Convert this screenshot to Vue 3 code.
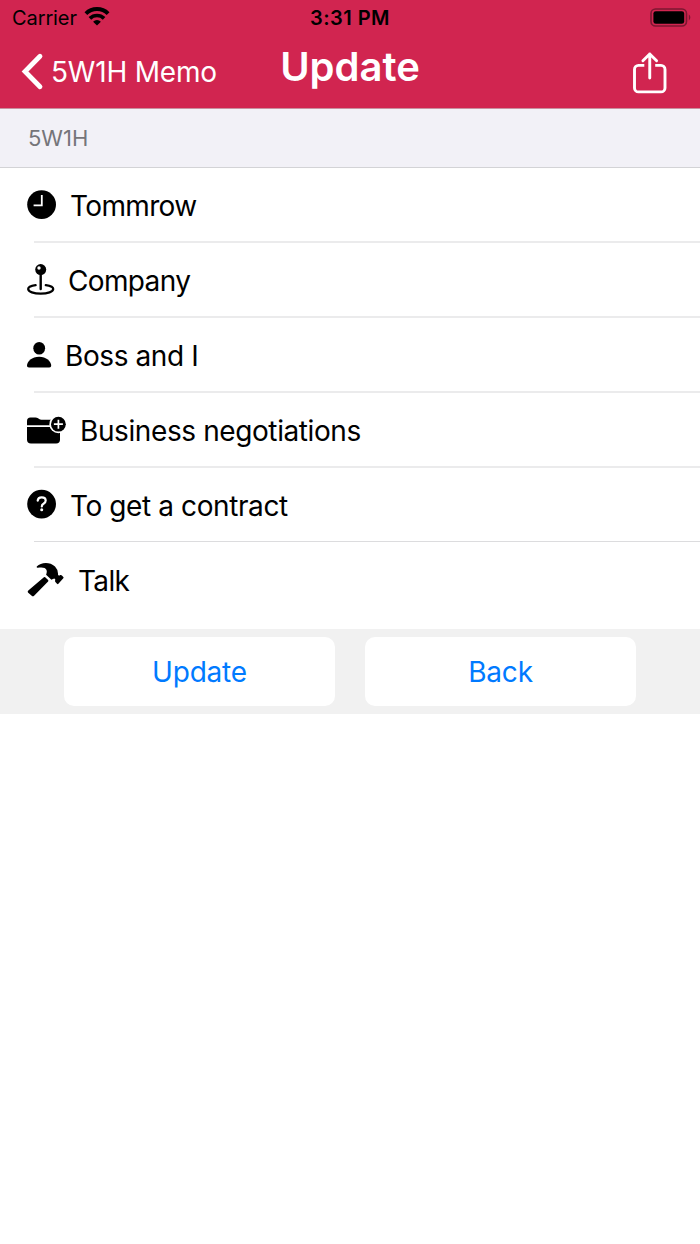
<script setup>
const rows = [
  { id: 'when', icon: 'clock', text: 'Tommrow' },
  { id: 'where', icon: 'pin', text: 'Company' },
  { id: 'who', icon: 'person', text: 'Boss and I' },
  { id: 'what', icon: 'folder', text: 'Business negotiations' },
  { id: 'why', icon: 'question', text: 'To get a contract' },
  { id: 'how', icon: 'hammer', text: 'Talk' },
]
</script>

<template>
  <main class="memo">
    <header class="memo__header">
      <div class="memo__status">
        <div class="memo__carrier">
          <span class="memo__carrier-name">Carrier</span>
          <svg width="26" height="20" viewBox="0 0 26 20" fill="none" stroke="#000" stroke-width="4">
            <path d="M1.900 7.600a16 16 0 0 1 22.200 0" />
            <path d="M5.900 12.400a10.200 10.200 0 0 1 14.200 0" stroke-width="3.700" />
            <path d="M13 19.400l-3.900-3.700a5.600 5.600 0 0 1 7.800 0z" fill="#000" stroke="none" />
          </svg>
        </div>
        <span class="memo__time">3:31 PM</span>
        <svg class="memo__battery" width="42" height="20" viewBox="0 0 42 20">
          <rect x="2" y="1" width="35.500" height="17" rx="4.500" fill="none" stroke="#7c1731" stroke-width="1.600" />
          <rect x="4.400" y="3.200" width="30.800" height="12.600" rx="2.400" />
          <path d="M39.800 6.600c2 1 2 4.800 0 5.800z" fill="#7c1731" />
        </svg>
      </div>
      <nav class="memo__nav">
        <a class="memo__back">
          <svg width="24" height="40" viewBox="0 0 24 40" fill="none" stroke="#fff" stroke-width="4.800" stroke-linecap="round" stroke-linejoin="miter">
            <path d="M20 4.200L5 19.500L20 34.800" />
          </svg>
          <span class="memo__back-text">5W1H Memo</span>
        </a>
        <h1 class="memo__title">Update</h1>
        <svg class="memo__share" width="36" height="44" viewBox="0 0 36 44" fill="none" stroke="#fff" stroke-width="2.900" stroke-linecap="round" stroke-linejoin="round">
          <path d="M12.300 15.400H6.500a4 4 0 0 0-4 4v18.500a4 4 0 0 0 4 4h22.500a4 4 0 0 0 4-4v-18.500a4 4 0 0 0-4-4H23.200" stroke-linecap="butt" />
          <path d="M17.750 28V4M10.900 10.800l6.850-6.800l6.850 6.800" />
        </svg>
      </nav>
    </header>

    <h2 class="memo__section">5W1H</h2>

    <ul class="memo__rows">
      <li v-for="row in rows" :key="row.id" class="memo__row" :class="`memo__row--${row.icon}`">
        <svg v-if="row.icon === 'clock'" width="30" height="36" viewBox="0 0 30 36">
          <circle cx="14.600" cy="17.600" r="14.400" />
          <path d="M6.600 18.400h8.200V8" fill="none" stroke="#fff" stroke-width="1.800" />
        </svg>
        <svg v-else-if="row.icon === 'pin'" width="28" height="36" viewBox="0 0 28 36">
          <path d="M8.600 23.200C4 23.900 1.200 25.300 1.200 27c0 2.700 5.600 4.600 12.500 4.600s12.500-1.900 12.500-4.600c0-1.700-2.800-3.100-7.400-3.800" fill="none" stroke="#000" stroke-width="2.300" stroke-linecap="round" />
          <path d="M13.700 9v18" stroke="#000" stroke-width="2.400" stroke-linecap="round" />
          <circle cx="13.700" cy="7.600" r="5.500" />
          <circle cx="12" cy="6" r="1.700" fill="#fff" />
        </svg>
        <svg v-else-if="row.icon === 'person'" width="25" height="36" viewBox="0 0 25 36">
          <ellipse cx="12.200" cy="11.200" rx="5.900" ry="6.300" />
          <path d="M2 30.600C.6 30.600 0 29.900 0 28.600c0-4.200 5-8.800 12.100-8.800S24.200 24.400 24.200 28.600c0 1.300-.6 2-2 2z" />
        </svg>
        <svg v-else-if="row.icon === 'folder'" width="40" height="36" viewBox="0 0 40 36">
          <path d="M0 13.200V8.900Q0 5.400 3.500 5.400H8.500q1.500 0 2.600.9l1 .8q1 .7 2.300.7H29q4 0 4 4v1.400z" />
          <path d="M0 14.900H33V27.600q0 3.900-3.900 3.900H4Q0 31.500 0 27.600z" />
          <circle cx="31.400" cy="12.200" r="9" fill="#fff" />
          <circle cx="31.400" cy="12.200" r="7.400" />
          <path d="M26.900 12.200h9M31.400 7.700v9" stroke="#fff" stroke-width="1.700" />
        </svg>
        <svg v-else-if="row.icon === 'question'" width="30" height="36" viewBox="0 0 30 36">
          <circle cx="14.600" cy="17.100" r="14.400" />
          <path d="M10.700 13.700c.2-2.200 1.700-3.400 4-3.400 2.400 0 4 1.300 4 3.200 0 1.700-.9 2.500-2.200 3.300-1.200.7-1.700 1.300-1.700 2.700" fill="none" stroke="#fff" stroke-width="2.200" stroke-linecap="round" />
          <circle cx="14.700" cy="22.800" r="1.500" fill="#fff" />
        </svg>
        <svg v-else width="38" height="36" viewBox="0 0 38 36">
          <path d="M16.900 15.200q.7-.6 1.300 0l2.900 2.900q.6.700 0 1.400L7.100 33.700q-1.200 1.200-2.400.1L1.200 30.700q-1.200-1.200.1-2.300z" />
          <path d="M10 4.300C13.500.4 22.500-.9 28 4.500q3.400 3.500 3 8.200l1 1 1.300-.6q.9-.4 1.600.3l1.400 1.500q.6.700 0 1.400l-4.900 5.500q-.7.700-1.400 0l-1.600-1.700q-.5-.6-.3-1.500l.2-1.100-.9-.9q-1.500.2-3 1.200L19.100 12.800c1.300-3.400.8-5.500-1.500-6.700-1.800-.9-4.100-.8-6.800-.3-1 .2-1.600-.6-.8-1.500z" />
        </svg>
        <span class="memo__text">{{ row.text }}</span>
      </li>
    </ul>

    <footer class="memo__actions">
      <button class="memo__button" type="button">Update</button>
      <button class="memo__button" type="button">Back</button>
    </footer>
  </main>
</template>

<style>
body {
  margin: 0;
  background: #fff;
}
</style>

<style scoped>
.memo {
  width: 700px;
  min-height: 1244px;
  background: #fff;
  color: #000;
  font-family: Inter, "Liberation Sans", sans-serif;
}

.memo svg {
  flex: none;
  display: block;
}

.memo__header {
  height: 108px;
  background: #d12550;
  border-bottom: 1px solid #c8909f;
}

.memo__status {
  display: grid;
  grid-template-columns: 1fr auto 1fr;
  align-items: center;
  height: 36px;
  padding: 0 10px 0 12px;
  font-size: 20px;
}

.memo__carrier {
  display: flex;
  align-items: center;
  gap: 7px;
}

.memo__carrier-name {
  letter-spacing: -0.1px;
}

.memo__carrier svg {
  margin-top: -4px;
}

.memo__time {
  margin-left: -2px;
  font-weight: 600;
  letter-spacing: 0.45px;
}

.memo__battery {
  justify-self: end;
  margin-top: -1px;
  margin-right: -1px;
}

.memo__nav {
  display: grid;
  grid-template-columns: 1fr auto 1fr;
  align-items: center;
  height: 72px;
  padding: 0 20px;
  color: #fff;
}

.memo__back {
  display: flex;
  align-items: center;
  gap: 7px;
  font-size: 28px;
  letter-spacing: -0.2px;
}

.memo__title {
  margin: -11px 0 0;
  font-size: 40px;
  font-weight: 600;
}

.memo__share {
  justify-self: end;
  margin-right: 12px;
}

.memo__section {
  box-sizing: border-box;
  height: 59px;
  margin: 0;
  padding-left: 28px;
  border-bottom: 1px solid #d3d3d6;
  background: #f2f1f7;
  color: #75757a;
  font-size: 22px;
  font-weight: 400;
  line-height: 58px;
}

.memo__rows {
  height: 461px;
  margin: 0;
  padding: 0;
  list-style: none;
}

.memo__row {
  display: flex;
  align-items: center;
  box-sizing: border-box;
  height: 75px;
  padding-left: 27px;
  background: linear-gradient(#ebebec, #ebebec) 34px 73px / 100% 2px no-repeat;
  font-size: 28px;
  letter-spacing: -0.4px;
  white-space: nowrap;
}

.memo__row svg {
  margin-top: -2px;
}

.memo__row--clock,
.memo__row--pin,
.memo__row--hammer {
  letter-spacing: -0.65px;
}

.memo__row--question {
  background: linear-gradient(#dcdcde, #dcdcde) 34px 73px / 100% 1px no-repeat;
}

.memo__row--hammer {
  background: none;
}

.memo__text {
  margin-left: 13px;
}

.memo__actions {
  display: flex;
  justify-content: center;
  align-items: center;
  gap: 30px;
  height: 85px;
  background: #f1f1f1;
}

.memo__button {
  width: 271px;
  height: 69px;
  padding: 1px 0 0;
  border: 0;
  border-radius: 10px;
  background: #fff;
  color: #007aff;
  font: 28px Inter, "Liberation Sans", sans-serif;
  letter-spacing: -0.2px;
}
</style>
